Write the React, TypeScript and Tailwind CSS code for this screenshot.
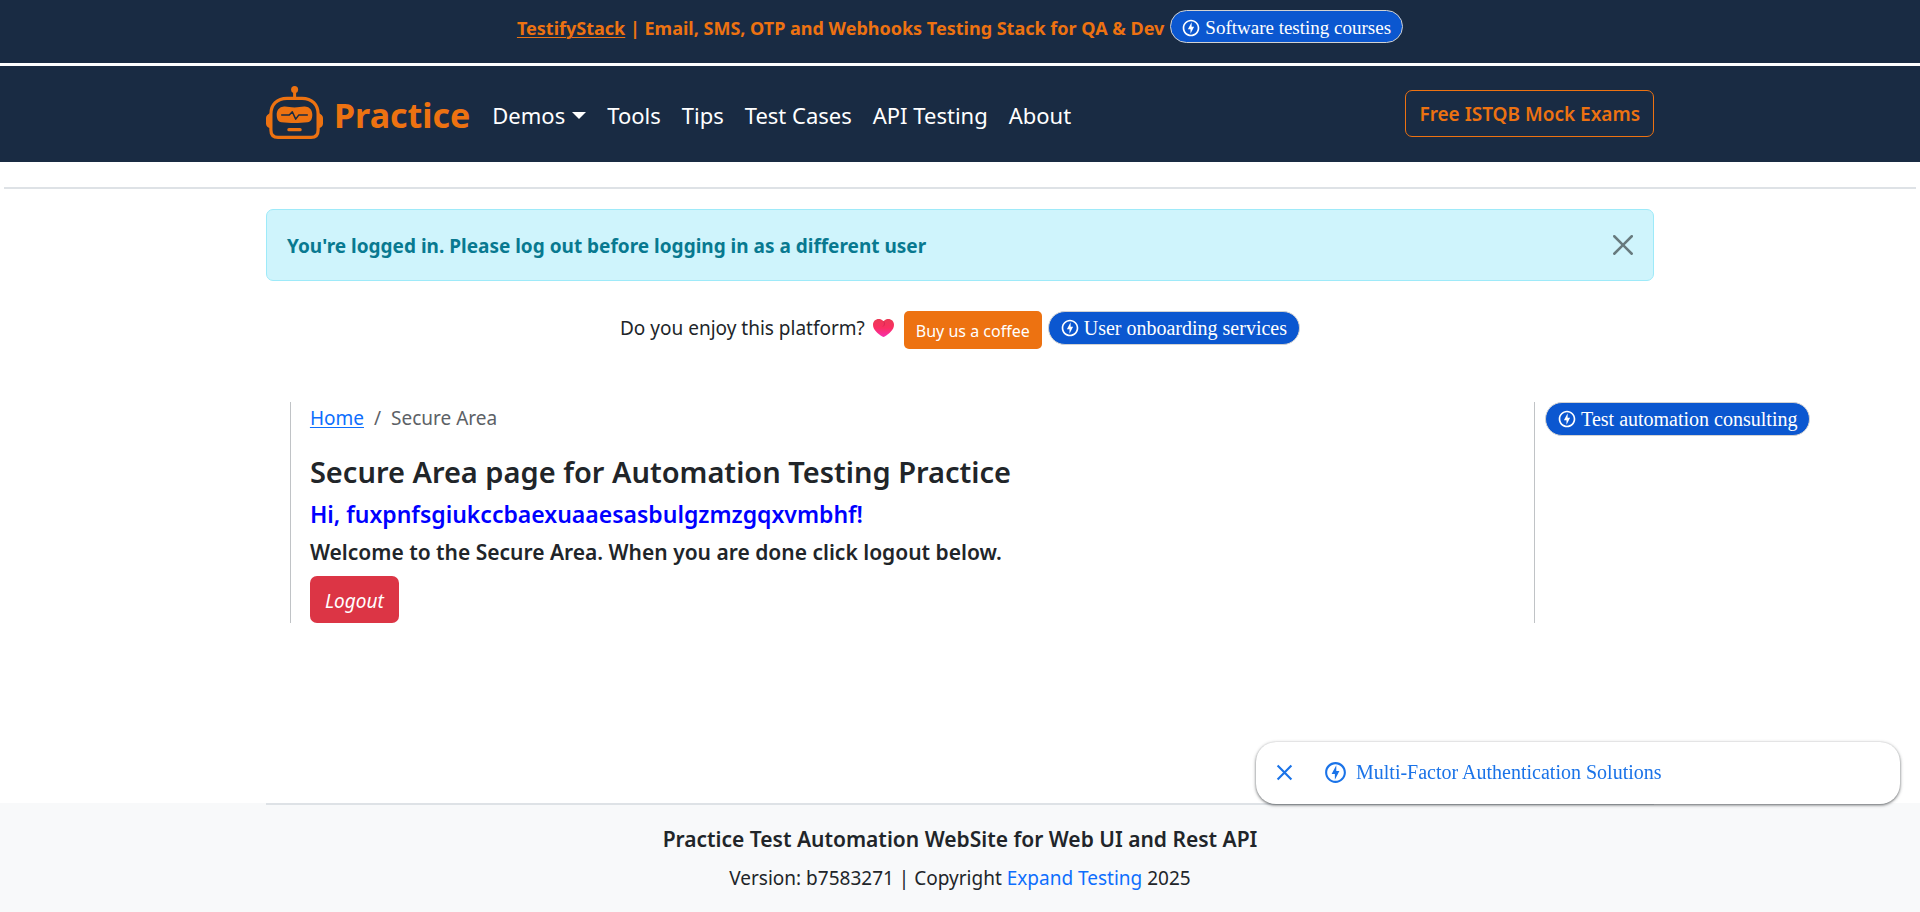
import React from 'react';

function BoltIcon({ className }: { className: string }) {
  return (
    <svg viewBox="0 0 24 24" fill="currentColor" aria-hidden="true" className={className}>
      <path d="M12 2.02c-5.51 0-9.98 4.47-9.98 9.98s4.47 9.98 9.98 9.98 9.98-4.47 9.98-9.98S17.51 2.02 12 2.02zm0 17.96c-4.4 0-7.98-3.58-7.98-7.98S7.6 4.02 12 4.02 19.98 7.6 19.98 12 16.4 19.98 12 19.98zM12.75 5l-4.5 8.5h3.14V19l4.36-8.5h-3z" />
    </svg>
  );
}

function AdPill({ label, small = false }: { label: string; small?: boolean }) {
  return (
    <a
      href="#"
      className={`inline-flex shrink-0 items-center gap-1 whitespace-nowrap rounded-full border border-[#d2d2d2] bg-[#0b57d0] font-['Liberation_Serif',serif] text-white ${small ? 'h-[33px] pr-[11px] pl-2.5 pt-0.5 text-[19px]' : 'h-[34px] pr-3 pl-[11px] text-[20px]'}`}
    >
      <BoltIcon className="size-5" />
      {label}
    </a>
  );
}

function RobotLogo() {
  return (
    <svg viewBox="0 0 57 53" className="h-[53px] w-[57px]" aria-hidden="true">
      <g fill="#ed7211">
        <circle cx="28.6" cy="3.5" r="3.5" />
        <rect x="27.1" y="5" width="3" height="7" />
        <path d="M5 27.3H3.8C1.6 28.3 0 30 0 32v5.500c0 2.500 1.600 4 3.800 4.500H5z" />
        <path d="M52 27.300h1.200c2.200 1 3.800 2.700 3.800 4.700v5.500c0 2.500-1.600 4-3.800 4.500H52z" />
        <path d="M17 20.700C21 20.200 24 21.500 28.500 21.500S36 20.200 40 20.700c4 .5 6.300 3.800 6.300 8s-1.300 7-4.800 7.500c-8 1.100-18 1.100-26 0-3.500-.5-4.800-3.300-4.800-7.500s2.300-7.500 6.300-8z" />
        <rect x="21.3" y="42" width="14.400" height="3.300" rx="1.600" />
      </g>
      <path
        d="M21 12.300h15c10 0 16.100 6.500 16.100 15.700v16c0 5-2.600 7.400-7 7.400H12c-4.500 0-7.100-2.400-7.100-7.400V28c0-9.200 6.100-15.700 16.100-15.700z"
        fill="none"
        stroke="#ed7211"
        strokeWidth="3.200"
      />
      <path
        d="M15.700 29h7.600l3-3.300 3.400 7.400 3-4 8.600-.1"
        fill="none"
        stroke="#192b43"
        strokeWidth="1.500"
        strokeLinejoin="round"
        strokeLinecap="round"
      />
    </svg>
  );
}

function Heart() {
  return (
    <svg viewBox="0 0 21 18" className="h-[18px] w-[21px]" role="img" aria-label="heart">
      <defs>
        <linearGradient id="heart" x1="0" y1="0" x2="0" y2="1">
          <stop offset="0" stopColor="#ea3a55" />
          <stop offset="0.5" stopColor="#fb2e62" />
          <stop offset="1" stopColor="#f62fb0" />
        </linearGradient>
      </defs>
      <path
        d="M10.500 2.200C12 .6 13.700 0 15.300 0 18.500 0 21 2.300 21 5.800c0 5.200-5 9-9.300 11.800-.8.500-1.600.5-2.400 0C5 14.800 0 11 0 5.800 0 2.300 2.500 0 5.700 0c1.600 0 3.300.6 4.800 2.200z"
        fill="url(#heart)"
      />
      <path d="M10.500 2.200c1.500 1.800 1.200 4-.5 5.300" fill="none" stroke="#c81e4b" strokeWidth="1" opacity=".6" />
    </svg>
  );
}

const links = ['Tools', 'Tips', 'Test Cases', 'API Testing', 'About'];

export default function App() {
  return (
    <div className="flex min-h-screen flex-col bg-white font-['Noto_Sans',sans-serif] text-[19px] leading-7 text-[#212529]">
      <div className="flex h-[63px] items-start justify-center gap-1.5 bg-[#192b43] pt-2.5">
        <p className="text-[18px] leading-9 font-bold text-[#ed7211]">
          <a href="#" className="underline decoration-1 underline-offset-2">TestifyStack</a> | Email, SMS, OTP and Webhooks Testing Stack for QA &amp; Dev
        </p>
        <AdPill label="Software testing courses" small />
      </div>

      <header className="mt-[3px] bg-[#192b43]">
        <nav className="mx-auto flex h-24 max-w-[1388px] items-center">
          <a href="#" className="flex items-center gap-[11px] pb-1 text-[34px] leading-10 font-bold text-[#ed7211]">
            <RobotLogo />
            <span className="pt-1.5">Practice</span>
          </a>
          <ul className="ml-[22px] flex items-center gap-[21px] pt-0.5 text-[22px] leading-8 text-white">
            <li>
              <button type="button" className="flex items-center gap-[7px]">
                Demos
                <svg viewBox="0 0 14 7" className="h-[7px] w-3.5" aria-hidden="true">
                  <path d="M0 0h14L7 7z" fill="currentColor" />
                </svg>
              </button>
            </li>
            {links.map((label) => (
              <li key={label}>
                <a href="#">{label}</a>
              </li>
            ))}
          </ul>
          <a
            href="#"
            className="mb-0.5 ml-auto flex h-[47px] items-center rounded-[7px] border border-[#ed7211] px-[13px] pt-0.5 text-[19px] font-semibold text-[#ed7211]"
          >
            Free ISTQB Mock Exams
          </a>
        </nav>
      </header>

      <hr className="mx-1 mt-[25px] border-t-2 border-[#dee2e6]" />

      <div className="mx-auto mt-5 w-full max-w-[1388px]">
        <div role="alert" className="flex h-[72px] items-center justify-between rounded-[7px] border border-[#9eeaf9] bg-[#cff4fc] px-5 text-[#087990]">
          <b className="pt-0.5 font-bold">You're logged in. Please log out before logging in as a different user</b>
          <button type="button" aria-label="Close" className="text-black/50">
            <svg viewBox="0 0 16 16" className="size-5" fill="currentColor" aria-hidden="true">
              <path d="M.293.293a1 1 0 0 1 1.414 0L8 6.586 14.293.293a1 1 0 1 1 1.414 1.414L9.414 8l6.293 6.293a1 1 0 0 1-1.414 1.414L8 9.414l-6.293 6.293a1 1 0 0 1-1.414-1.414L6.586 8 .293 1.707a1 1 0 0 1 0-1.414z" />
            </svg>
          </button>
        </div>
      </div>

      <div className="mt-[30px] flex items-start justify-center gap-1.5">
        <p className="flex h-[34px] items-center gap-2 pr-1">
          Do you enjoy this platform?
          <Heart />
        </p>
        <a href="#" className="flex h-[38px] items-center rounded-[5px] bg-[#ed7211] px-3 pt-0.5 text-[16px] text-white">
          Buy us a coffee
        </a>
        <AdPill label="User onboarding services" />
      </div>

      <div className="mt-[53px] grid grid-cols-[15.1%_1fr_20.1%]">
        <main className="col-start-2 border-l border-[#c0c3c6] pl-[19px]">
          <nav aria-label="Breadcrumb" className="flex h-8 items-center gap-2.5 text-[#5c6166]">
            <a href="#" className="text-[#0d6efd] underline underline-offset-2">Home</a>
            <span>/</span>
            <span>Secure Area</span>
          </nav>
          <h1 className="mt-5 text-[29px] leading-9 font-semibold">Secure Area page for Automation Testing Practice</h1>
          <h2 className="mt-2 text-[23px] leading-8 font-semibold text-[#0000ff]">Hi, fuxpnfsgiukccbaexuaaesasbulgzmzgqxvmbhf!</h2>
          <h3 className="mt-2 text-[21px] leading-7 font-semibold">Welcome to the Secure Area. When you are done click logout below.</h3>
          <a href="#" className="mt-2.5 flex h-[47px] w-fit items-center rounded-[7px] bg-[#dc3545] px-[15px] pt-0.5 text-[19px] text-white italic">
            Logout
          </a>
        </main>
        <aside className="border-l border-[#c0c3c6] pl-2.5">
          <AdPill label="Test automation consulting" />
        </aside>
      </div>

      <footer className="mt-auto bg-[#f8f9fa] pb-5 text-center">
        <hr className="mx-auto max-w-[1388px] border-t-2 border-[#dee2e6]" />
        <h4 className="pt-5 text-[21px] leading-7 font-semibold">Practice Test Automation WebSite for Web UI and Rest API</h4>
        <p className="mt-[11px] leading-7">
          Version: b7583271 | Copyright <a href="#" className="text-[#0d6efd]">Expand Testing</a> 2025
        </p>
      </footer>

      <div className="fixed right-5 bottom-[108px] flex h-[62px] w-[644px] items-center rounded-[20px] bg-white pb-0.5 pl-5 text-[#1a73e8] shadow-[0_1px_3px_1px_rgba(60,64,67,0.3),0_1px_2px_rgba(60,64,67,0.5)]">
        <button type="button" aria-label="Dismiss">
          <svg viewBox="0 0 16 16" className="size-[17px]" aria-hidden="true">
            <path d="M1.500 1.500l13 13M14.500 1.500l-13 13" stroke="currentColor" strokeWidth="2" />
          </svg>
        </button>
        <a href="#" className="ml-[30px] flex items-center gap-2 font-['Liberation_Serif',serif] text-[20px]">
          <BoltIcon className="size-[25px]" />
          Multi-Factor Authentication Solutions
        </a>
      </div>
    </div>
  );
}
